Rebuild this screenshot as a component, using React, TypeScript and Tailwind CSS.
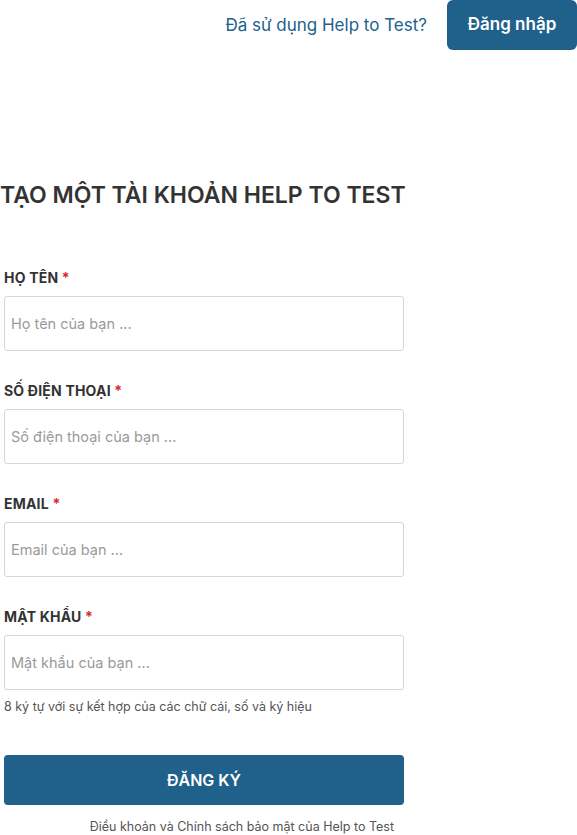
const font = { fontFamily: '"Inter", "Noto Sans", sans-serif' };

function Field({ label, placeholder }: { label: string; placeholder: string }) {
  return (
    <div className="flex flex-col">
      <label className="text-[14px] font-bold text-[#333] leading-[20px] tracking-[0.2px]">
        {label} <span className="text-[#e0222f]">*</span>
      </label>
      <input
        className="mt-[8px] h-[55px] w-[400px] rounded-[3px] border border-[#d6d6d6] px-[6px] text-[14.5px] text-[#555] placeholder:text-[#9a9a9a] outline-none"
        placeholder={placeholder}
      />
    </div>
  );
}

export default function App() {
  return (
    <div className="min-h-[835px] w-[577px] bg-white" style={font}>
      <div className="flex items-center justify-end h-[50px]">
        <a className="text-[17px] text-[#20618c] mr-[20px] mt-[2px]">Đã sử dụng Help to Test?</a>
        <button className="h-[50px] w-[130px] rounded-md bg-[#20618c] text-[17px] font-semibold text-white">
          Đăng nhập
        </button>
      </div>

      <h1 className="mt-[130px] text-[23px] font-semibold text-[#333] leading-[30px]">
        TẠO MỘT TÀI KHOẢN HELP TO TEST
      </h1>

      <form className="mt-[58px] ml-[4px] flex flex-col gap-[30px] w-[400px]">
        <Field label="HỌ TÊN" placeholder="Họ tên của bạn ..." />
        <Field label="SỐ ĐIỆN THOẠI" placeholder="Số điện thoại của bạn ..." />
        <Field label="EMAIL" placeholder="Email của bạn ..." />
        <div className="flex flex-col">
          <Field label="MẬT KHẨU" placeholder="Mật khẩu của bạn ..." />
          <p className="mt-[9px] text-[12.5px] leading-[16px] text-[#555]">8 ký tự với sự kết hợp của các chữ cái, số và ký hiệu</p>
        </div>
      </form>

      <div className="ml-[4px] w-[400px] mt-[40px]">
        <button className="h-[50px] w-full rounded-[4px] bg-[#20618c] text-[16px] font-semibold text-white">
          ĐĂNG KÝ
        </button>
        <p className="mt-[14px] text-right pr-[10px] text-[12.5px] leading-[16px] text-[#555]">
          Điều khoản và Chính sách bảo mật của Help to Test
        </p>
      </div>
    </div>
  );
}
